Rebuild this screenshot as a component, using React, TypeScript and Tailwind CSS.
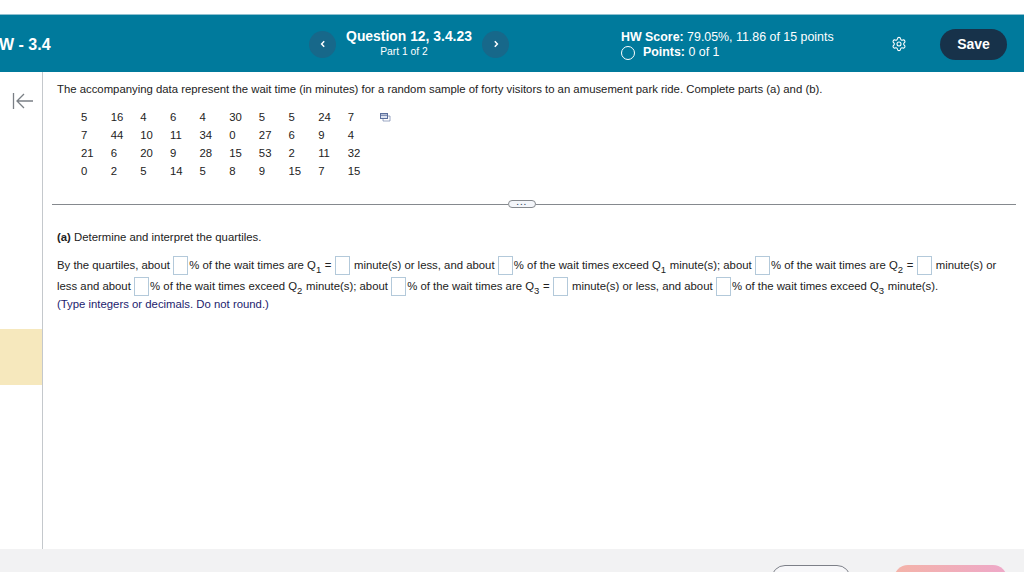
import { Settings } from "lucide-react";

const ROWS = [
  [5, 16, 4, 6, 4, 30, 5, 5, 24, 7],
  [7, 44, 10, 11, 34, 0, 27, 6, 9, 4],
  [21, 6, 20, 9, 28, 15, 53, 2, 11, 32],
  [0, 2, 5, 14, 5, 8, 9, 15, 7, 15],
];

function Box() {
  return <span className="mr-[1px] ml-[3.3px] inline-block h-[19px] w-[15px] border border-[#b3c9da] bg-white align-[-6px]" />;
}

function Q({ n }: { n: number }) {
  return (
    <span className="mr-[0.5px]">
      Q<sub className="bottom-[-4px] text-[9.5px]">{n}</sub>
    </span>
  );
}

function NavButton({ dir }: { dir: "left" | "right" }) {
  return (
    <button type="button" className="flex h-[27px] w-[27px] items-center justify-center rounded-full bg-[#17688a]">
      <svg width="8" height="8" viewBox="0 0 8 8" fill="none" stroke="white" strokeWidth="1.5">
        <path d={dir === "left" ? "M5.2 1.2 2.6 4l2.6 2.8" : "M2.8 1.2 5.4 4 2.8 6.8"} />
      </svg>
    </button>
  );
}

export default function App() {
  return (
    <div className="flex h-[572px] w-[1024px] flex-col overflow-hidden bg-white font-['Liberation_Sans',Arial,sans-serif] text-[11.35px] text-[#222]">
      <div className="h-[14px] shrink-0 bg-white" />
      <header className="flex h-[58px] shrink-0 items-center border-t border-[#8fc0d0] bg-[#007a9c] pt-[1px] text-white">
        <h1 className="-ml-px w-[310px] pt-[1px] text-[16px] font-bold">W - 3.4</h1>
        <NavButton dir="left" />
        <div className="mb-[2px] w-[146px] text-center">
          <div className="text-[13.9px] leading-[17px] font-bold">Question 12, 3.4.23</div>
          <div className="pr-[10px] text-[10.3px] leading-[13px]">Part 1 of 2</div>
        </div>
        <NavButton dir="right" />
        <div className="mt-[2px] ml-[112px] w-[260px] text-[12.4px]">
          <div className="leading-[15px]">
            <span className="font-bold">HW Score:</span> 79.05%, 11.86 of 15 points
          </div>
          <div className="flex items-center leading-[15px]">
            <span className="mr-[8px] h-[14px] w-[14px] rounded-full border-[1.5px] border-white" />
            <span className="font-bold">Points:</span>&nbsp;0 of 1
          </div>
        </div>
        <Settings size={16} strokeWidth={1.6} className="ml-[10px]" />
        <button type="button" className="ml-[33px] h-[31px] w-[67px] rounded-full bg-[#17324a] text-[14px] font-bold text-white">
          Save
        </button>
      </header>

      <div className="flex min-h-0 flex-1">
        <aside className="flex w-[43px] shrink-0 flex-col border-r border-[#c4c8cc] pt-[20px]">
          <svg width="22" height="18" viewBox="0 0 22 18" fill="none" stroke="#7a7f85" strokeWidth="1.3" className="ml-[12px]">
            <path d="M1.5 1v16M21 9H5M12 2 5 9l7 7" />
          </svg>
          <div className="mt-[219px] h-[56px] bg-[#f6e8bd]" />
        </aside>

        <main className="min-w-0 flex-1 pt-[10px]">
          <p className="ml-[14px] leading-[15px]">
            The accompanying data represent the wait time (in minutes) for a random sample of forty visitors to an amusement park ride. Complete parts (a) and (b).
          </p>

          <div className="mt-[11px] ml-[38px] flex items-start">
            <div className="grid grid-cols-[repeat(10,29.65px)]">
              {ROWS.flat().map((v, i) => (
                <span key={i} className="h-[18px] leading-[18px]">
                  {v}
                </span>
              ))}
            </div>
            <svg width="11" height="9" viewBox="0 0 11 9" fill="none" stroke="#5b6f9c" className="mt-[5px] ml-[3px]">
              <rect x="0.5" y="0.5" width="7" height="5" fill="#dfe5f2" />
              <path d="M0.5 2.2h7" />
              <path d="M3 5.5v2.5h7V3H7.5" strokeOpacity="0.6" />
            </svg>
          </div>

          <div className="mt-[20px] ml-[9px] flex w-[964px] items-center">
            <div className="h-px flex-1 bg-[#85898e]" />
            <div className="flex h-[8px] w-[28px] items-center justify-center rounded-full border border-[#85898e] bg-[#f4f6fa] pb-[3px] text-[8px] leading-none font-bold tracking-[1.5px] text-[#40506a]">
              ...
            </div>
            <div className="h-px w-[480px] bg-[#85898e]" />
          </div>

          <p className="mt-[22px] ml-[14px] leading-[15px]">
            <span className="font-bold">(a)</span> Determine and interpret the quartiles.
          </p>

          <div className="mt-[10px] ml-[14px] w-[960px] whitespace-nowrap">
            <div className="h-[21px] leading-[21px]">
              By the quartiles, about<Box />% of the wait times are <Q n={1} /> =<Box /> minute(s) or less, and about<Box />% of the wait times exceed <Q n={1} /> minute(s); about<Box />% of the wait times are <Q n={2} /> =<Box /> minute(s) or
            </div>
            <div className="h-[21px] leading-[21px]">
              less and about<Box />% of the wait times exceed <Q n={2} /> minute(s); about<Box />% of the wait times are <Q n={3} /> =<Box /> minute(s) or less, and about<Box />% of the wait times exceed <Q n={3} /> minute(s).
            </div>
            <p className="-mt-[1px] leading-[17px] text-[#1c1c6e]">(Type integers or decimals. Do not round.)</p>
          </div>
        </main>
      </div>

      <footer className="flex h-[23px] shrink-0 items-start bg-[#f2f2f3] pt-[16px] pl-[771px]">
        <div className="h-[30px] w-[80px] shrink-0 rounded-[14px] border border-[#7d8088] bg-[#f7f7f9]" />
        <div className="ml-[43px] h-[30px] w-[113px] shrink-0 rounded-[14px] bg-gradient-to-r from-[#f4b3a8] to-[#eea8c8]" />
      </footer>
    </div>
  );
}
